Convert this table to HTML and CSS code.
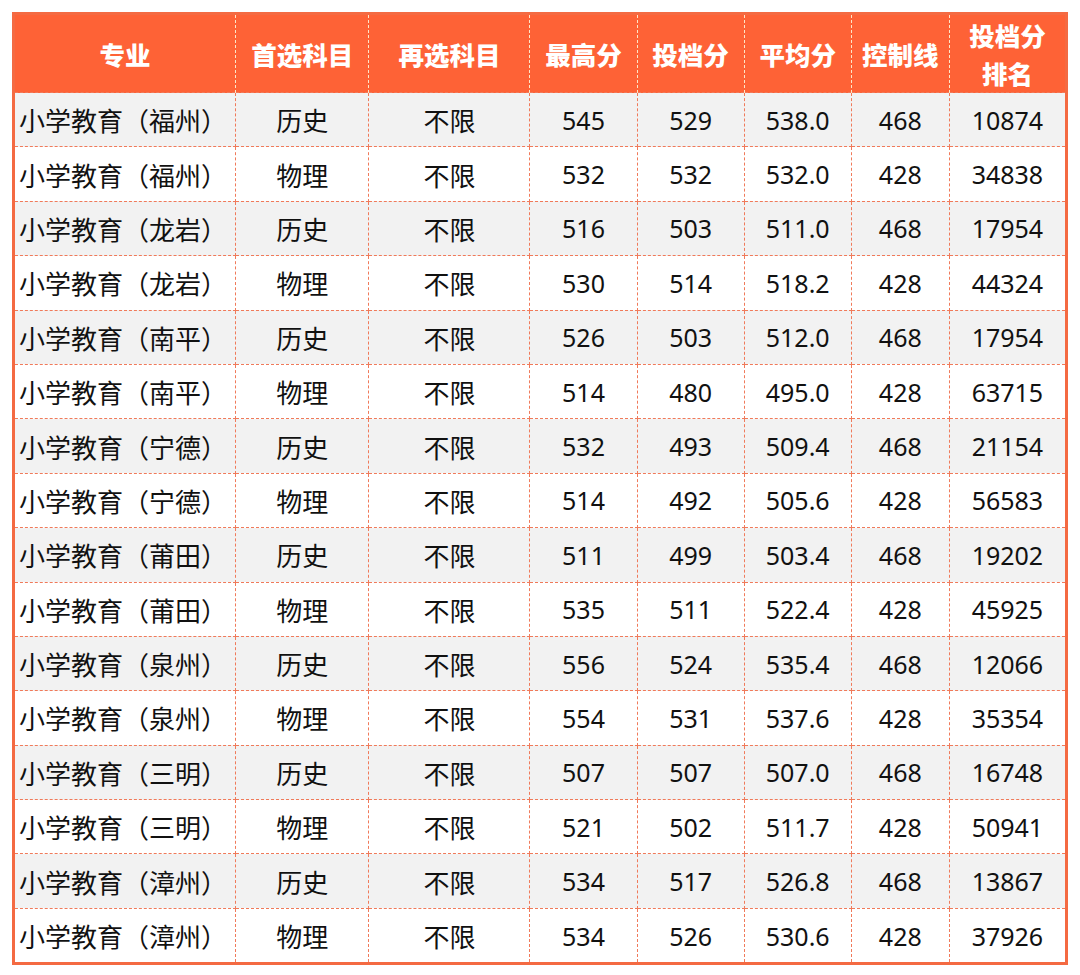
FILE: index.html
```html
<!DOCTYPE html>
<html lang="zh-CN">
<head>
<meta charset="utf-8">
<link rel="stylesheet" href="styles.css">
</head>
<body>
<table class="score-table">
  <colgroup>
    <col class="c1"><col class="c2"><col class="c3"><col class="c4"><col class="c5"><col class="c6"><col class="c7"><col class="c8">
  </colgroup>
  <thead>
    <tr>
      <th>专业</th><th>首选科目</th><th>再选科目</th><th>最高分</th><th>投档分</th><th>平均分</th><th>控制线</th><th class="rank">投档分<br>排名</th>
    </tr>
  </thead>
  <tbody>
    <tr><td class="name">小学教育（福州）</td><td class="cjk">历史</td><td class="cjk">不限</td><td>545</td><td>529</td><td>538.0</td><td>468</td><td class="rank">10874</td></tr>
    <tr><td class="name">小学教育（福州）</td><td class="cjk">物理</td><td class="cjk">不限</td><td>532</td><td>532</td><td>532.0</td><td>428</td><td class="rank">34838</td></tr>
    <tr><td class="name">小学教育（龙岩）</td><td class="cjk">历史</td><td class="cjk">不限</td><td>516</td><td>503</td><td>511.0</td><td>468</td><td class="rank">17954</td></tr>
    <tr><td class="name">小学教育（龙岩）</td><td class="cjk">物理</td><td class="cjk">不限</td><td>530</td><td>514</td><td>518.2</td><td>428</td><td class="rank">44324</td></tr>
    <tr><td class="name">小学教育（南平）</td><td class="cjk">历史</td><td class="cjk">不限</td><td>526</td><td>503</td><td>512.0</td><td>468</td><td class="rank">17954</td></tr>
    <tr><td class="name">小学教育（南平）</td><td class="cjk">物理</td><td class="cjk">不限</td><td>514</td><td>480</td><td>495.0</td><td>428</td><td class="rank">63715</td></tr>
    <tr><td class="name">小学教育（宁德）</td><td class="cjk">历史</td><td class="cjk">不限</td><td>532</td><td>493</td><td>509.4</td><td>468</td><td class="rank">21154</td></tr>
    <tr><td class="name">小学教育（宁德）</td><td class="cjk">物理</td><td class="cjk">不限</td><td>514</td><td>492</td><td>505.6</td><td>428</td><td class="rank">56583</td></tr>
    <tr><td class="name">小学教育（莆田）</td><td class="cjk">历史</td><td class="cjk">不限</td><td>511</td><td>499</td><td>503.4</td><td>468</td><td class="rank">19202</td></tr>
    <tr><td class="name">小学教育（莆田）</td><td class="cjk">物理</td><td class="cjk">不限</td><td>535</td><td>511</td><td>522.4</td><td>428</td><td class="rank">45925</td></tr>
    <tr><td class="name">小学教育（泉州）</td><td class="cjk">历史</td><td class="cjk">不限</td><td>556</td><td>524</td><td>535.4</td><td>468</td><td class="rank">12066</td></tr>
    <tr><td class="name">小学教育（泉州）</td><td class="cjk">物理</td><td class="cjk">不限</td><td>554</td><td>531</td><td>537.6</td><td>428</td><td class="rank">35354</td></tr>
    <tr><td class="name">小学教育（三明）</td><td class="cjk">历史</td><td class="cjk">不限</td><td>507</td><td>507</td><td>507.0</td><td>468</td><td class="rank">16748</td></tr>
    <tr><td class="name">小学教育（三明）</td><td class="cjk">物理</td><td class="cjk">不限</td><td>521</td><td>502</td><td>511.7</td><td>428</td><td class="rank">50941</td></tr>
    <tr><td class="name">小学教育（漳州）</td><td class="cjk">历史</td><td class="cjk">不限</td><td>534</td><td>517</td><td>526.8</td><td>468</td><td class="rank">13867</td></tr>
    <tr><td class="name">小学教育（漳州）</td><td class="cjk">物理</td><td class="cjk">不限</td><td>534</td><td>526</td><td>530.6</td><td>428</td><td class="rank">37926</td></tr>
  </tbody>
</table>
</body>
</html>
```
FILE: styles.css
```css
html, body {
  margin: 0;
  padding: 0;
  background: #ffffff;
}
body {
  padding: 12px 0 0 12px;
  font-family: "Noto Sans", "Noto Sans CJK SC", sans-serif;
}
.score-table {
  border-collapse: collapse;
  table-layout: fixed;
  width: 1056px;
  border: 3px solid #f46a42;
}
.c1 { width: 222px; }
.c2 { width: 133px; }
.c3 { width: 161px; }
.c4 { width: 107px; }
.c5 { width: 107px; }
.c6 { width: 107px; }
.c7 { width: 98px; }
.c8 { width: 117px; }

.score-table th {
  background: #fe6236;
  color: #ffffff;
  font-family: "Noto Sans CJK SC", sans-serif;
  font-weight: 900;
  font-size: 25.5px;
  line-height: 38px;
  height: 77px;
  padding: 0;
  text-align: center;
  vertical-align: middle;
  border-left: 1px dashed #fde6c8;
  border-right: 1px dashed #fde6c8;
}
.score-table td {
  height: 53.4px;
  padding: 0;
  text-align: center;
  vertical-align: middle;
  color: #111111;
  font-size: 25px;
  font-family: "Noto Sans", "Noto Sans CJK SC", sans-serif;
  border: 1px dashed #f07a5a;
}
.score-table td.cjk {
  font-family: "Noto Sans CJK SC", sans-serif;
  font-size: 26px;
}
.score-table td.name {
  text-align: left;
  padding-left: 4px;
  font-size: 26px;
  font-family: "Noto Sans CJK SC", sans-serif;
  white-space: nowrap;
}
.score-table td.rank {
  border-left-color: #d8252e;
}
.score-table tbody tr:nth-child(odd) td {
  background: #f2f2f2;
}
.score-table tbody tr:nth-child(even) td {
  background: #ffffff;
}
```
